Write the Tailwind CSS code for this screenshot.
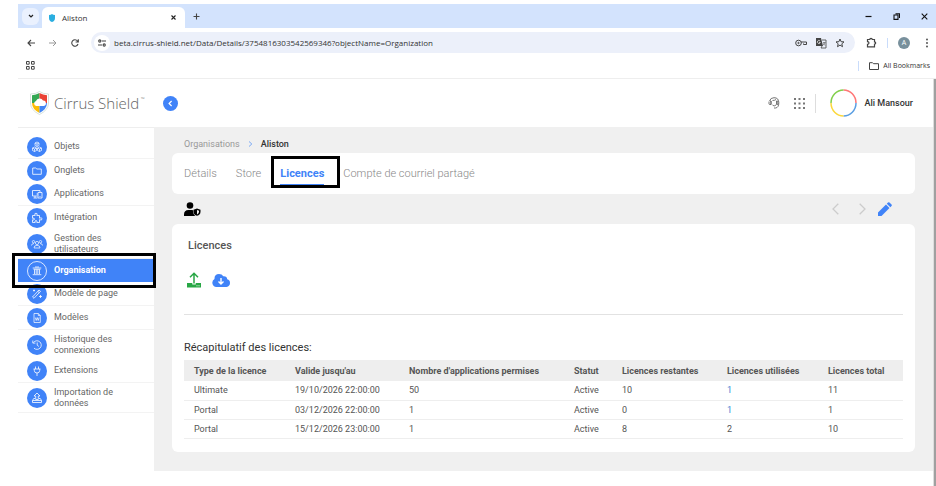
<!DOCTYPE html>
<html lang="fr">
<head>
    <meta charset="UTF-8">
    <meta name="viewport" content="width=device-width, initial-scale=1.0">
    <title>Aliston</title>
    <script src="https://cdn.jsdelivr.net/npm/@tailwindcss/browser@4"></script>
</head>
<body class="bg-white pl-[18px] pt-1 min-h-screen flex flex-col font-['Roboto',sans-serif] text-[#555]">

    <!-- Browser window -->
    <div class="font-['Open_Sans',sans-serif] text-[#333]">
        <!-- Tab strip -->
        <div class="flex items-center h-6 bg-[#d3e3fd]">
            <button aria-label="Search tabs" class="ml-1 w-[17px] h-[17px] rounded-md bg-[#eaf1fe] flex items-center justify-center">
                <svg class="w-[6px] h-[6px]" viewBox="0 0 6 6" fill="none" stroke="#222" stroke-width="1.2"><path d="M1 2l2 2 2-2"/></svg>
            </button>
            <div class="self-end ml-[3px] h-[21px] w-[143px] rounded-t-md bg-white flex items-center pl-[7px] pr-[7px]">
                <svg class="w-[6px] h-2" viewBox="0 0 6 8"><path d="M0 1Q2 1 3 0Q4 1 6 1V4Q6 7 3 8Q0 7 0 4Z" fill="#2aaee0"/></svg>
                <span class="ml-[7px] grow text-[8px] leading-3">Aliston</span>
                <button aria-label="Close tab" class="p-[2px]">
                    <svg class="w-[5px] h-[5px]" viewBox="0 0 5 5" stroke="#222" stroke-width="1.1"><path d="M.5 .5l4 4M4.500 .5l-4 4"/></svg>
                </button>
            </div>
            <button aria-label="New tab" class="ml-2">
                <svg class="w-[7px] h-[7px]" viewBox="0 0 7 7" stroke="#444" stroke-width="1.1"><path d="M3.500 .5v6M.5 3.500h6"/></svg>
            </button>
            <div class="ml-auto flex items-center gap-[21px] pr-2">
                <button aria-label="Minimize"><svg class="w-[7px] h-[7px]" viewBox="0 0 7 7" stroke="#111" stroke-width="1.2"><path d="M.5 3.500h6"/></svg></button>
                <button aria-label="Restore"><svg class="w-[7px] h-[7px]" viewBox="0 0 7 7" fill="none" stroke="#111" stroke-width="1.1"><path d="M1 2h4v4.400H1zM2.500 .8h4V5"/></svg></button>
                <button aria-label="Close"><svg class="w-[7px] h-[7px]" viewBox="0 0 7 7" stroke="#111" stroke-width="1.1"><path d="M.7 .7l5.600 5.600M6.300 .7L.7 6.300"/></svg></button>
            </div>
        </div>

        <!-- Address bar -->
        <div class="flex items-center h-[29px] pl-[9px] pr-[7px]">
            <button aria-label="Back"><svg class="w-2 h-2" viewBox="0 0 8 8" fill="none" stroke="#444" stroke-width="1.1"><path d="M8 4H1M4 1L1 4l3 3"/></svg></button>
            <button aria-label="Forward" class="ml-[14px]"><svg class="w-2 h-2" viewBox="0 0 8 8" fill="none" stroke="#999" stroke-width="1"><path d="M0 4h7M4 1l3 3-3 3"/></svg></button>
            <button aria-label="Reload" class="ml-[14px]"><svg class="w-2 h-2" viewBox="0 0 8 8" fill="none" stroke="#444" stroke-width="1.1"><path d="M7 5A3.200 3.200 0 1 1 6.500 2L7.200 3M7.300 .3V3H4.600"/></svg></button>
            <div class="grow ml-3 h-[21px] rounded-full bg-[#ecf0fa] flex items-center pl-[3px] pr-[10px]">
                <button aria-label="Site information" class="w-4 h-4 rounded-full bg-white flex items-center justify-center">
                    <svg class="w-2 h-2" viewBox="0 0 8 8" fill="none" stroke="#444" stroke-width="1.1"><circle cx="1.800" cy="2" r="1.100"/><path d="M4 2h4M0 6h4"/><circle cx="6.200" cy="6" r="1.100"/></svg>
                </button>
                <input type="text" aria-label="Address" value="beta.cirrus-shield.net/Data/Details/3754816303542569346?objectName=Organization" class="grow ml-1 text-[8px] leading-3 bg-transparent outline-none">
                <div class="flex items-center gap-2">
                    <button aria-label="Passwords"><svg class="w-3 h-2" viewBox="0 0 12 8" fill="none" stroke="#444"><circle cx="3.500" cy="4" r="2.800"/><circle cx="3.500" cy="4" r=".7"/><path d="M6 3h5.500v2.500h-3V4.500"/></svg></button>
                    <button aria-label="Translate"><svg class="w-3 h-3" viewBox="0 0 12 12" fill="none"><path d="M1 1h5l2 8H1z" fill="#444"/><path d="M7 3h4v8H6l1-2" stroke="#555" stroke-width=".9"/><path d="M5 4a1.500 1.500 0 1 0 .3 1.500H4" stroke="#fff" stroke-width=".7"/><path d="M8 5.500h2.500M9 5v.5M8 8q2-1 2-2.500M8.300 6.300L10 8.500" stroke="#555" stroke-width=".6"/></svg></button>
                    <button aria-label="Bookmark this page"><svg class="w-[10px] h-[10px]" viewBox="0 0 10 10" fill="none" stroke="#444"><path d="M5 1l1.100 2.700 2.900.2-2.200 1.900.7 2.900L5 7.100 2.500 8.700l.7-2.900L1 3.900l2.900-.2z"/></svg></button>
                </div>
            </div>
            <button aria-label="Extensions" class="ml-[11px]"><svg class="w-[11px] h-[11px]" viewBox="0 0 11 11" fill="none" stroke="#444" stroke-width="1.200"><path d="M1.500 2.500h2.300a1.200 1.200 0 0 1 2.400 0h2.300v2.300a1.200 1.200 0 0 1 0 2.400v2.600h-7V7.300q1.500-.2 1.500-1.300T1.500 4.700z"/></svg></button>
            <div class="ml-[10px] w-px h-[10px] bg-[#c9dcfb]"></div>
            <button aria-label="Profile" class="ml-[10px] w-3 h-3 rounded-full bg-[#78909c] text-white text-[7px] leading-3">A</button>
            <button aria-label="Menu" class="ml-[15px]"><svg class="w-1 h-[10px]" viewBox="0 0 4 10" fill="#444"><circle cx="2" cy="1.500" r=".9"/><circle cx="2" cy="5" r=".9"/><circle cx="2" cy="8.500" r=".9"/></svg></button>
        </div>

        <!-- Bookmarks bar -->
        <div class="flex items-center justify-between h-[22px] pl-2 pr-[6px] pb-1 border-b border-[#eee]">
            <button aria-label="Apps"><svg class="w-[9px] h-[9px]" viewBox="0 0 9 9" fill="none" stroke="#444"><path d="M.5 .5h2.700v2.700H.5zM5.500 .5h2.700v2.700H5.500zM.5 5.500h2.700v2.700H.5zM5.500 5.500h2.700v2.700H5.500z"/></svg></button>
            <div class="flex items-center">
                <div class="w-px h-[10px] bg-[#c9dcfb]"></div>
                <button class="ml-[10px] flex items-center gap-1 text-[7px] leading-3 whitespace-nowrap">
                    <svg class="w-[10px] h-2" viewBox="0 0 10 8" fill="none" stroke="#444"><path d="M.5 .7h3l1 1h5v5.800h-9z"/></svg>
                    All Bookmarks
                </button>
            </div>
        </div>
    </div>

    <div class="grow flex">
        <div class="grow min-w-0">

            <!-- Site header -->
            <header class="flex items-center h-12 pl-3 pr-5">
                <a href="#" class="flex items-center text-[#666]">
                    <svg class="w-[19px] h-6" viewBox="0 0 19 24">
                        <path d="M.5 3Q6 3 9.500 .5Q13 3 18.500 3V12Q18.500 19 9.500 23.500Q.5 19 .5 12Z" fill="#fff" stroke="#c5d6cc" stroke-width=".7"/>
                        <path d="M9.500 2Q6 4 2 4.200V12H9.500Z" fill="#34a853"/>
                        <path d="M9.500 2Q13 4 17 4.200V12H9.500Z" fill="#ea4335"/>
                        <path d="M2 12H9.500V22Q2 18 2 12Z" fill="#fbbc05"/>
                        <path d="M17 12H9.500V22Q17 18 17 12Z" fill="#4285f4"/>
                        <path d="M6.300 15a2.500 2.500 0 0 1-.3-4.900 3.800 3.800 0 0 1 7-.5 2.700 2.700 0 0 1 .5 5.400z" fill="#fff"/>
                    </svg>
                    <span class="ml-[5px] font-['Open_Sans',sans-serif] font-light text-[15px] leading-5 whitespace-nowrap">Cirrus Shield<sup class="text-[5px] ml-[2px] -top-2">™</sup></span>
                </a>
                <button aria-label="Réduire le menu" class="ml-[18px] w-[15px] h-[15px] rounded-full bg-[#4083f8] flex items-center justify-center">
                    <svg class="w-[7px] h-[7px]" viewBox="0 0 7 7" fill="none" stroke="#fff" stroke-width="1.200"><path d="M4.600 1L2.100 3.500l2.500 2.500"/></svg>
                </button>
                <div class="ml-auto flex items-center">
                    <button aria-label="Assistance">
                        <svg class="w-3 h-3" viewBox="0 0 12 12" fill="none" stroke="#666" stroke-width=".9"><path d="M1.500 4Q2.500 .7 6 .7q4.800 0 4.800 5T7.500 11H6M3 4v3.500M1 4.500v2.300q0 .7 1 .7h1V4H2M8.500 4v3.500M8.500 4h1.300v3.500H8.500M4.500 8Q6 10 8 8M4.500 3.500Q7 3.500 8 2.500"/></svg>
                    </button>
                    <button aria-label="Applications" class="ml-[14px]">
                        <svg class="w-[11px] h-[11px]" viewBox="0 0 11 11" fill="#777"><path d="M0 0h2v2H0zM4.500 0h2v2h-2zM9 0h2v2H9zM0 4.500h2v2H0zM4.500 4.500h2v2h-2zM9 4.500h2v2H9zM0 9h2v2H0zM4.500 9h2v2h-2zM9 9h2v2H9z"/></svg>
                    </button>
                    <div class="ml-[10px] w-px h-[19px] bg-[#ddd]"></div>
                    <button class="ml-[14px] flex items-center gap-2 text-[9px] leading-3 font-medium text-[#333]">
                        <svg class="w-[27px] h-7" viewBox="0 0 27 28" fill="none" stroke-width="1.500">
                            <path d="M13.500 1A12.500 13 0 0 1 26 14" stroke="#f77"/>
                            <path d="M26 14A12.500 13 0 0 1 13.500 27" stroke="#5b9fe3"/>
                            <path d="M13.500 27A12.500 13 0 0 1 1 14" stroke="#fbd83c"/>
                            <path d="M1 14A12.500 13 0 0 1 13.500 1" stroke="#82cf4b"/>
                        </svg>
                        Ali Mansour
                    </button>
                </div>
            </header>

            <div class="flex">
                <!-- Sidebar -->
                <nav class="w-[136px] shrink-0 pt-[7px] border-t border-[#eee] text-[9px] leading-[11px] text-[#666]">
                    <ul>
                        <li class="border-b border-[#f3f3f3]">
                            <a href="#" class="flex items-center gap-[7px] h-[23px] pl-[9px]">
                                <svg class="w-5 h-5 rounded-full bg-[#4083f8]" viewBox="0 0 20 20" fill="none" stroke="#fff" stroke-width=".7"><path d="M10 5l2 1v2.500l-2 1-2-1V6zM7.500 10l2 1v2.500l-2 1-2-1V11zM12.500 10l2 1v2.500l-2 1-2-1V11zM8 6l2 1 2-1M10 7v2.500M5.500 11l2 1 2-1M7.500 12v2.500M10.500 11l2 1 2-1M12.500 12v2.500"/></svg>
                                Objets
                            </a>
                        </li>
                        <li>
                            <a href="#" class="flex items-center gap-[7px] h-[23px] pl-[9px]">
                                <svg class="w-5 h-5 rounded-full bg-[#4083f8]" viewBox="0 0 20 20" fill="none" stroke="#fff" stroke-width=".8"><path d="M5.700 7h3l1.200 1h4.400v5.300H5.700z"/></svg>
                                Onglets
                            </a>
                        </li>
                        <li class="border-b border-[#f3f3f3]">
                            <a href="#" class="flex items-center gap-[7px] h-[23px] pl-[9px]">
                                <svg class="w-5 h-5 rounded-full bg-[#4083f8]" viewBox="0 0 20 20" fill="none" stroke="#fff" stroke-width=".8"><path d="M10.500 12H5.500V6.500h7.500V8M8 12v2M6.500 14h4M11 8.500h4V14h-4zM12.500 12.500h1M11 10H9.500"/></svg>
                                Applications
                            </a>
                        </li>
                        <li>
                            <a href="#" class="flex items-center gap-[7px] h-[23px] pl-[9px]">
                                <svg class="w-5 h-5 rounded-full bg-[#4083f8]" viewBox="0 0 20 20" fill="none" stroke="#fff" stroke-width=".8"><path d="M5.500 7.500h2.700Q7 5.200 9 5.200t.8 2.300h2.700v2.700q2.500-1.200 2.500.7t-2.500.8v2.800H9.800q.8-2-.8-2t-.8 2H5.500v-2.700q2 .8 2-.7t-2-.8z"/></svg>
                                Intégration
                            </a>
                        </li>
                        <li class="border-b border-[#f3f3f3]">
                            <a href="#" class="flex items-center gap-[7px] h-[29px] pl-[9px] pr-8">
                                <svg class="w-5 h-5 shrink-0 rounded-full bg-[#4083f8]" viewBox="0 0 20 20" fill="none" stroke="#fff" stroke-width=".7"><circle cx="10" cy="9" r="1.600"/><circle cx="6.500" cy="7.700" r="1.200"/><circle cx="13.500" cy="7.700" r="1.200"/><path d="M7 14q0-2.700 3-2.700t3 2.700zM4.500 11.500q0-2 2.500-2M15.500 11.500q0-2-2.500-2"/></svg>
                                Gestion des utilisateurs
                            </a>
                        </li>
                        <li class="relative">
                            <a href="#" aria-current="page" class="flex items-center gap-[7px] h-[23px] pl-[9px] bg-[#4083f8] text-white font-bold">
                                <svg class="w-5 h-5" viewBox="0 0 20 20" fill="none" stroke="#fff" stroke-width=".8"><circle cx="10" cy="10" r="9.500"/><path d="M5.700 7h8.600M6.500 8.300h7M7.500 8.500v4.500M9.200 8.500v4.500M10.800 8.500v4.500M12.500 8.500v4.500M5.700 13.700h8.600M8 6h4"/></svg>
                                Organisation
                            </a>
                            <div class="absolute -left-[6px] -right-[2px] -inset-y-[6px] border-3 border-black pointer-events-none"></div>
                        </li>
                        <li class="border-b border-[#f3f3f3]">
                            <a href="#" class="flex items-center gap-[7px] h-[23px] pl-[9px]">
                                <svg class="w-5 h-5 rounded-full bg-[#4083f8]" viewBox="0 0 20 20" fill="none" stroke="#fff" stroke-width=".8"><path d="M5.500 13l6.500-7 1.500 1.300-6.500 7zM10.800 7.300l1.500 1.400M7 5.500v2M6 6.500h2M13.500 11v3M12 12.500h3"/></svg>
                                Modèle de page
                            </a>
                        </li>
                        <li class="border-b border-[#f3f3f3]">
                            <a href="#" class="flex items-center gap-[7px] h-[23px] pl-[9px]">
                                <svg class="w-5 h-5 rounded-full bg-[#4083f8]" viewBox="0 0 20 20" fill="none" stroke="#fff" stroke-width=".7"><path d="M7 5.500h4.300L13.300 7.500v7H7zM11.300 5.500v2h2M8.300 9.500l.9 3 1-3 1 3 .9-3"/></svg>
                                Modèles
                            </a>
                        </li>
                        <li>
                            <a href="#" class="flex items-center gap-[7px] h-[29px] pl-[9px] pr-8">
                                <svg class="w-5 h-5 shrink-0 rounded-full bg-[#4083f8]" viewBox="0 0 20 20" fill="none" stroke="#fff" stroke-width=".8"><path d="M6.500 7.500A4.300 4.300 0 1 1 7 13.200M5.800 5.500v2.600h2.600M10.200 7.500v2.700l1.700 1.300"/></svg>
                                Historique des connexions
                            </a>
                        </li>
                        <li class="border-b border-[#f3f3f3]">
                            <a href="#" class="flex items-center gap-[7px] h-[23px] pl-[9px]">
                                <svg class="w-5 h-5 rounded-full bg-[#4083f8]" viewBox="0 0 20 20" fill="none" stroke="#fff" stroke-width=".8"><path d="M8.500 5.500V8M11.500 5.500V8M6.500 8h7M7.300 8v1.500q0 2.500 2.700 2.500t2.700-2.500V8M10 12v3"/></svg>
                                Extensions
                            </a>
                        </li>
                        <li class="border-b border-[#f3f3f3]">
                            <a href="#" class="flex items-center gap-[7px] h-[29px] pl-[9px] pr-6">
                                <svg class="w-5 h-5 shrink-0 rounded-full bg-[#4083f8]" viewBox="0 0 20 20" fill="none" stroke="#fff" stroke-width=".8"><path d="M10 5l3 3h-1.700v3.500H8.700V8H7zM8 10.500H6.700L5.500 12.500v2h9v-2l-1.200-2H12M5.500 12.500h9"/></svg>
                                Importation de données
                            </a>
                        </li>
                    </ul>
                </nav>

                <!-- Content -->
                <main class="grow min-w-0 bg-[#f0f0f0] px-[18px] pt-[11px] pb-[19px]">
                    <div class="flex items-center gap-2 pl-3 text-[9px] leading-3 text-[#999]">
                        <a href="#">Organisations</a>
                        <svg class="w-[5px] h-[6px]" viewBox="0 0 5 6" fill="none" stroke="#7aa9f5"><path d="M1 .5L3.800 3 1 5.500"/></svg>
                        <span class="font-medium text-[#333]">Aliston</span>
                    </div>

                    <div class="mt-[3px] h-[41px] bg-white rounded-md flex items-center gap-[19px] pl-3 text-[11px] leading-4 font-light text-[#888]">
                        <a href="#">Détails</a>
                        <a href="#">Store</a>
                        <div class="relative">
                            <a href="#" class="block font-bold text-[#4083f8] py-[2px] border-b-2 border-[#4083f8] -mb-[2px]">Licences</a>
                            <div class="absolute -left-[9px] -right-4 -top-2 -bottom-1 border-3 border-black pointer-events-none"></div>
                        </div>
                        <a href="#">Compte de courriel partagé</a>
                    </div>

                    <div class="flex items-center h-[30px] pl-3 pr-[23px]">
                        <button aria-label="Droits utilisateur">
                            <svg class="w-[17px] h-[14px]" viewBox="0 0 17 14"><circle cx="6" cy="3.500" r="3.300" fill="#000"/><path d="M0 14v-1.500Q0 8 4.500 8h3q1 0 1.700.3V10q0 2.500 2 4z" fill="#000"/><path d="M13 6.500l3.500 1.300v2q0 3-3.500 4-3.500-1-3.500-4v-2z" fill="#000"/><path d="M13 8l2 .8v1.200q0 1.500-2 2.400z" fill="#f0f0f0"/></svg>
                        </button>
                        <div class="ml-auto flex items-center">
                            <button aria-label="Précédent"><svg class="w-[7px] h-3" viewBox="0 0 7 12" fill="none" stroke="#ccc" stroke-width="1.300"><path d="M6.300 .7L1 6l5.300 5.300"/></svg></button>
                            <button aria-label="Suivant" class="ml-5"><svg class="w-[7px] h-3" viewBox="0 0 7 12" fill="none" stroke="#ccc" stroke-width="1.300"><path d="M.7 .7L6 6 .7 11.300"/></svg></button>
                            <button aria-label="Modifier" class="ml-3"><svg class="w-[14px] h-[14px]" viewBox="0 0 14 14" fill="#4083f8"><path d="M0 14v-3.500L8 2.500 11.500 6 3.500 14zM8.800 1.700L10 .5q.7-.7 1.500 0l2 2q.7.7 0 1.500l-1.200 1.200z"/></svg></button>
                        </div>
                    </div>

                    <section class="bg-white rounded-md px-3 pt-[14px] pb-[13px]">
                        <h2 class="pl-1 text-[11px] leading-4 font-medium">Licences</h2>
                        <div class="mt-[18px] pl-[3px] pb-[26px] flex items-center gap-[11px] border-b border-[#e2e2e2]">
                            <button aria-label="Téléverser">
                                <svg class="w-[14px] h-4" viewBox="0 0 14 16" fill="none" stroke="#28a745"><path d="M7 11.500V1.500M3 5.300L7 1.300l4 4" stroke-width="1.500"/><path d="M0 11h5.300v1.500h3.400V11H14v4.500H0z" fill="#28a745" stroke="none"/><path d="M9.500 13.800h1M11.500 13.800h1" stroke="#fff"/></svg>
                            </button>
                            <button aria-label="Télécharger">
                                <svg class="w-[18px] h-4" viewBox="0 0 18 16"><path d="M4.300 15A4.300 4.300 0 0 1 2.500 7Q2.300 2 7 2q3 0 4.300 2.300Q15 4 15.200 7.300 18 8 18 11t-3.500 4z" fill="#4083f8"/><path d="M9 6v6M6.500 9.500L9 12l2.500-2.500" fill="none" stroke="#fff" stroke-width="1.400"/></svg>
                            </button>
                        </div>

                        <h3 class="mt-[25px] text-[11px] leading-4 text-[#333]">Récapitulatif des licences:</h3>
                        <table class="mt-1 w-full table-fixed text-left text-[9px] leading-3 whitespace-nowrap">
                            <colgroup>
                                <col class="w-[101px]">
                                <col class="w-[114px]">
                                <col class="w-[165px]">
                                <col class="w-[48px]">
                                <col class="w-[105px]">
                                <col class="w-[101px]">
                                <col class="w-[85px]">
                            </colgroup>
                            <thead class="bg-[#eee]">
                                <tr class="h-[21px]">
                                    <th class="pl-[10px]">Type de la licence</th>
                                    <th class="pl-[10px]">Valide jusqu'au</th>
                                    <th class="pl-[10px]">Nombre d'applications permises</th>
                                    <th class="pl-[10px]">Statut</th>
                                    <th class="pl-[10px]">Licences restantes</th>
                                    <th class="pl-[10px]">Licences utilisées</th>
                                    <th class="pl-[10px]">Licences total</th>
                                </tr>
                            </thead>
                            <tbody>
                                <tr class="h-[19px] border-b border-[#eee]">
                                    <td class="pl-[10px]">Ultimate</td>
                                    <td class="pl-[10px]">19/10/2026 22:00:00</td>
                                    <td class="pl-[10px]">50</td>
                                    <td class="pl-[10px]">Active</td>
                                    <td class="pl-[10px]">10</td>
                                    <td class="pl-[10px]"><a href="#" class="text-[#3f87d4]">1</a></td>
                                    <td class="pl-[10px]">11</td>
                                </tr>
                                <tr class="h-[19px] border-b border-[#eee]">
                                    <td class="pl-[10px]">Portal</td>
                                    <td class="pl-[10px]">03/12/2026 22:00:00</td>
                                    <td class="pl-[10px]">1</td>
                                    <td class="pl-[10px]">Active</td>
                                    <td class="pl-[10px]">0</td>
                                    <td class="pl-[10px]"><a href="#" class="text-[#3f87d4]">1</a></td>
                                    <td class="pl-[10px]">1</td>
                                </tr>
                                <tr class="h-[19px] border-b border-[#eee]">
                                    <td class="pl-[10px]">Portal</td>
                                    <td class="pl-[10px]">15/12/2026 23:00:00</td>
                                    <td class="pl-[10px]">1</td>
                                    <td class="pl-[10px]">Active</td>
                                    <td class="pl-[10px]">8</td>
                                    <td class="pl-[10px]">2</td>
                                    <td class="pl-[10px]">10</td>
                                </tr>
                            </tbody>
                        </table>
                    </section>
                </main>
            </div>
        </div>

        <!-- Scrollbar -->
        <div class="w-[3px] shrink-0 bg-[#a0a0a0] border-l border-[#ddd]"></div>
    </div>

</body>
</html>
